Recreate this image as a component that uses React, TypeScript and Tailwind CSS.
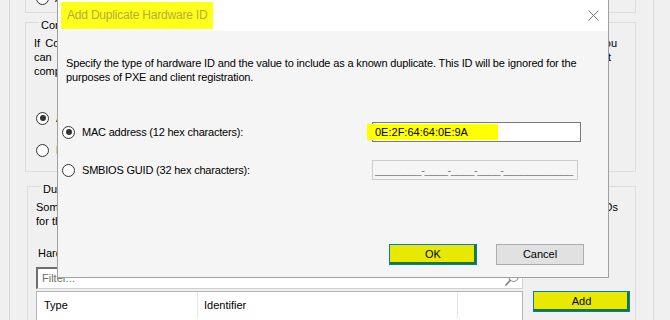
import React from "react";

function Radio({ checked }: { checked?: boolean }) {
  return (
    <span className="flex h-[13px] w-[13px] shrink-0 items-center justify-center rounded-full border border-[#333333] bg-white">
      {checked && <span className="h-[6px] w-[6px] rounded-full bg-[#333333]" />}
    </span>
  );
}

function Background() {
  return (
    <div className="ml-[9px] h-full w-[645px] border-x border-[#d9d9d9] pl-[15px] pr-[17px]">
      <div className="h-[13px] overflow-hidden border-x border-b border-[#dcdcdc]">
        <div className="-mt-[10px] flex items-center gap-[6px] pl-[10px]">
          <Radio />
          <span>Automatically approve all computers (not recommended)</span>
        </div>
      </div>

      <fieldset className="-mt-[1px] h-[160px] border border-[#dcdcdc] pl-[8px]">
        <legend className="ml-[5px] px-[2px] pt-[6px] leading-[14px]">Conflicting records</legend>
        <div className="mt-[4px] leading-[14px]">
          <p className="w-[583px] text-justify [text-align-last:justify]">
            If Configuration Manager detects a conflict between client records that have the same hardware ID or GUID, you
          </p>
          <p className="w-[577px] text-justify [text-align-last:justify]">
            can manually resolve the conflict or automatically create a new client record for the computer that
          </p>
          <p>computers that were reinstalled, reimaged or recovered keep their history.</p>
        </div>
        <div className="mt-[33px] flex h-[14px] items-center gap-[7px] pl-[2px]">
          <Radio checked />
          <span>Automatically resolve conflicting records</span>
        </div>
        <div className="mt-[18px] flex h-[14px] items-center gap-[7px] pl-[2px]">
          <Radio />
          <span>Manually resolve conflicting records</span>
        </div>
      </fieldset>

      <fieldset className="ml-[2px] mt-[4px] border border-[#dcdcdc] pl-[8px] pb-[10px]">
        <legend className="ml-[5px] px-[2px] pt-[6px] leading-[14px]">Duplicate hardware identifiers</legend>
        <div className="mt-[4px] leading-[14px]">
          <p className="w-[582px] text-justify [text-align-last:justify]">
            Some computers might have duplicate hardware IDs. Configuration Manager ignores these hardware IDs
          </p>
          <p>for the purposes of PXE boot and client registration.</p>
        </div>
        <p className="mt-[18px] pl-[2px] leading-[14px]">Hardware identifiers:</p>
        <div className="mt-[7px] flex">
          <div className="w-[487px]">
            <div className="flex h-[22px] items-center justify-between border-l-2 border-t-2 border-b border-r border-l-[#6e6e6e] border-t-[#6e6e6e] border-b-[#d0d0d0] border-r-[#d0d0d0] bg-white pl-[4px] pr-[2px]">
              <span className="text-[#6d6d6d]">Filter...</span>
              <svg width="16" height="18" viewBox="0 0 16 18" fill="none">
                <circle cx="9.5" cy="7" r="4.5" stroke="#8a8a8a" strokeWidth="1.2" />
                <path d="M6.3 10.3 L2 15" stroke="#7a7a7a" strokeWidth="1.6" strokeLinecap="round" />
              </svg>
            </div>
            <div className="mt-[2px] h-[40px] border border-[#b5b5b5] bg-white">
              <div className="flex h-[26px] items-center">
                <div className="flex h-full w-[161px] items-center border-r border-[#e5e5e5] pl-[7px]">Type</div>
                <div className="flex h-full w-[260px] items-center border-r border-[#e5e5e5] pl-[6px]">Identifier</div>
              </div>
            </div>
          </div>
          <div className="ml-[10px] mt-[24px]">
            <button className="flex h-[21px] w-[97px] items-center justify-center border border-[#0078d7] bg-[#e8e800] shadow-[inset_-1px_-1px_0_1px_#1f7a1f]">
              Add
            </button>
          </div>
        </div>
      </fieldset>
    </div>
  );
}

function Dialog() {
  return (
    <div className="absolute left-[57px] top-[-1px] flex h-[279px] w-[552px] flex-col border border-[#a0a0a0] bg-[#f5f5f5]">
      <div className="flex h-[31px] shrink-0 items-center justify-between bg-white pl-[3px] pr-[9px]">
        <span className="bg-[#ffff1a] px-[6px] py-[6px] text-[12px] leading-[15px] tracking-[-0.2px] text-[#b3ad3a]">
          Add Duplicate Hardware ID
        </span>
        <svg width="11" height="11" viewBox="0 0 11 11">
          <path d="M0.5 0.5 L10.5 10.5 M10.5 0.5 L0.5 10.5" stroke="#777777" strokeWidth="1" />
        </svg>
      </div>
      <div className="flex-1 pt-[25px]">
        <p className="pl-[8px] leading-[14px] tracking-[-0.15px]">
          Specify the type of hardware ID and the value to include as a known duplicate. This ID will be ignored for the
          <br />
          purposes of PXE and client registration.
        </p>
        <div className="mt-[38px] grid grid-cols-[310px_209px] items-center pl-[4px]">
          <label className="flex items-center gap-[7px]">
            <Radio checked />
            <span className="tracking-[-0.2px]">MAC address (12 hex characters):</span>
          </label>
          <div className="flex h-[20px] items-center border border-[#7a7a7a] bg-white">
            <span className="-ml-[6px] flex h-[16px] w-[131px] items-center bg-[#ffff00] pl-[8px]">0E:2F:64:64:0E:9A</span>
          </div>
        </div>
        <div className="mt-[18px] grid grid-cols-[310px_206px] items-center pl-[4px]">
          <label className="flex items-center gap-[7px]">
            <Radio />
            <span className="tracking-[-0.2px]">SMBIOS GUID (32 hex characters):</span>
          </label>
          <div className="flex h-[20px] items-center overflow-hidden whitespace-nowrap border border-[#cccccc] bg-[#f5f5f5] pl-[2px] tracking-[-0.35px] text-[#7a7a7a]">
            ________-____-____-____-____________
          </div>
        </div>
        <div className="mt-[64px] flex justify-end gap-[19px] pr-[24px]">
          <button className="flex h-[21px] w-[88px] items-center justify-center border border-[#0078d7] bg-[#e8e800] shadow-[inset_-1px_-1px_0_1px_#1f7a1f]">
            OK
          </button>
          <button className="flex h-[21px] w-[88px] items-center justify-center border border-[#adadad] bg-[#e1e1e1]">
            Cancel
          </button>
        </div>
      </div>
    </div>
  );
}

export default function App() {
  return (
    <div className="relative h-[320px] w-[670px] overflow-hidden bg-[#f0f0f0] font-['Liberation_Sans',Arial,sans-serif] text-[11px] text-black">
      <Background />
      <Dialog />
    </div>
  );
}
